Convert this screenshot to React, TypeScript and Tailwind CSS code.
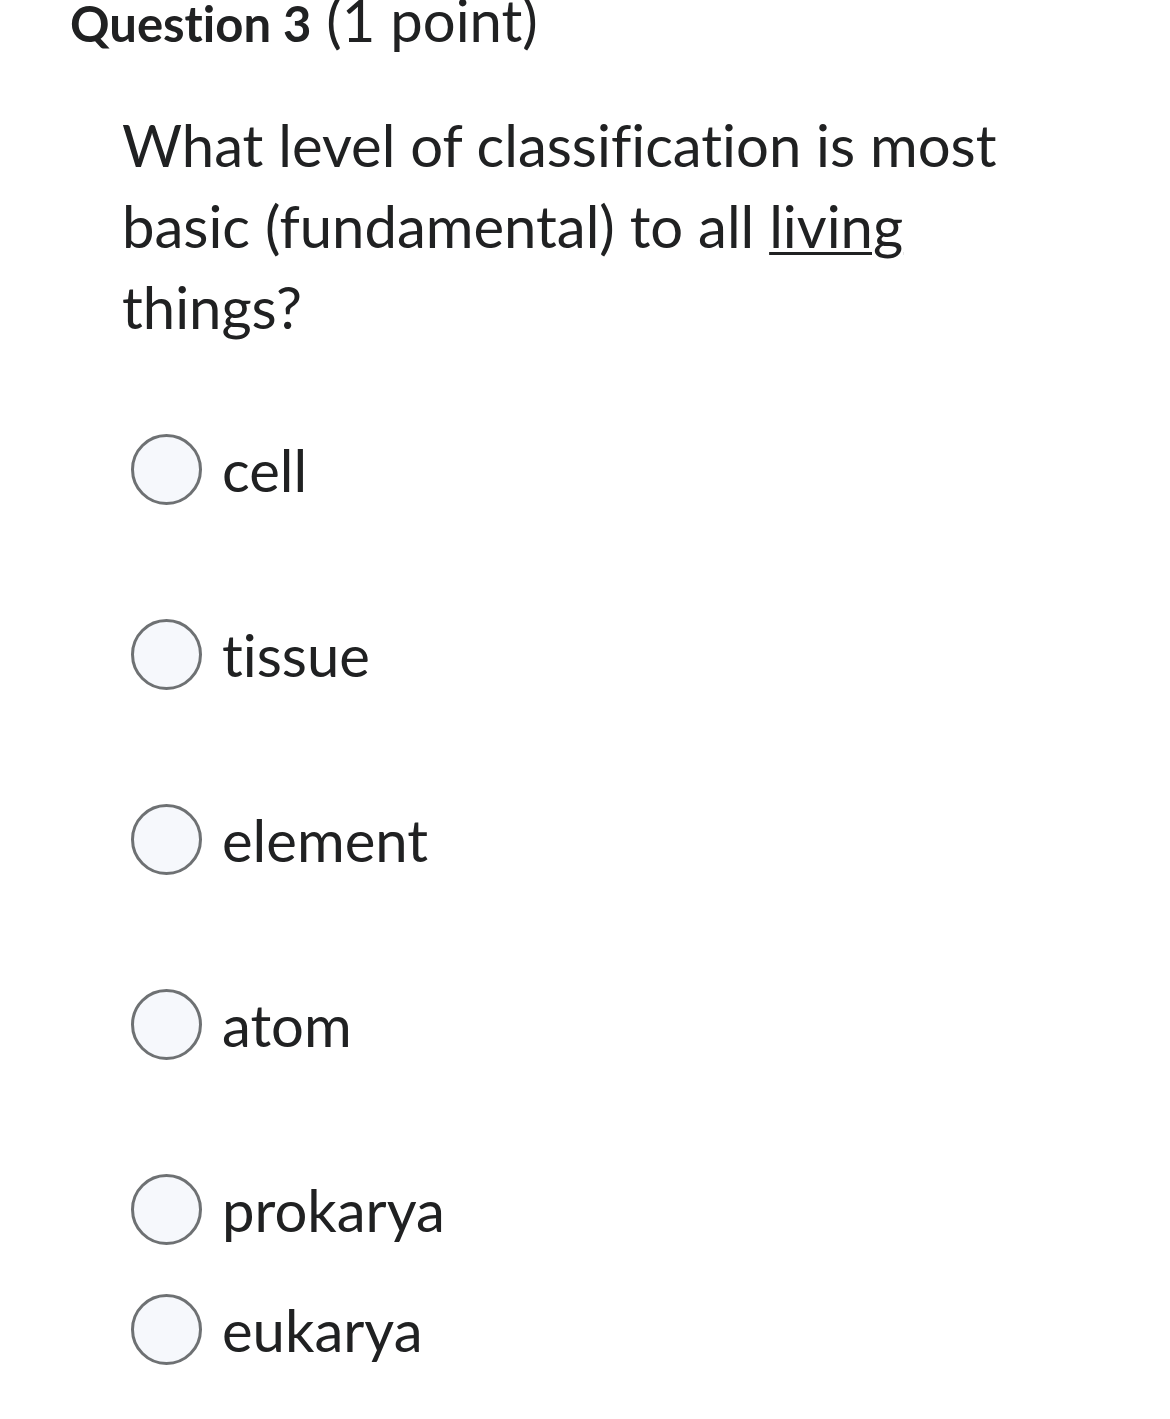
const options = ['cell', 'tissue', 'element', 'atom', 'prokarya'];

function Radio({ label }: { label: string }) {
  return (
    <label className="flex items-center gap-[20px]">
      <span className="w-[71px] h-[71px] shrink-0 rounded-full border-[3px] border-[#6e7173] bg-[#f6f8fc]" />
      <span className="text-[58px] leading-[70px] text-[#202122]">{label}</span>
    </label>
  );
}

export default function App() {
  return (
    <div className="w-[1170px] h-[1419px] bg-white overflow-hidden font-['Lato','Noto_Sans',sans-serif] text-[#202122] [font-variant-ligatures:none]">
      <h2 className="pl-[70px] mt-[-9px] text-[58px] leading-[58px] whitespace-nowrap">
        <span className="font-bold text-[49px]">Question 3</span> <span>(1 point)</span>
      </h2>

      <div className="pl-[122px] mt-[52px] w-[1030px]">
        <p className="text-[58px] leading-[81px]">
          What level of classification is most basic (fundamental) to all{' '}
          <span className="underline decoration-[3px] underline-offset-[4px]">living</span> things?
        </p>

        <div className="mt-[87px] pl-[9px] flex flex-col">
          <div className="flex flex-col gap-[114px]">
            {options.map((o) => (
              <Radio key={o} label={o} />
            ))}
          </div>
          <div className="mt-[49px]">
            <Radio label="eukarya" />
          </div>
        </div>
      </div>
    </div>
  );
}
